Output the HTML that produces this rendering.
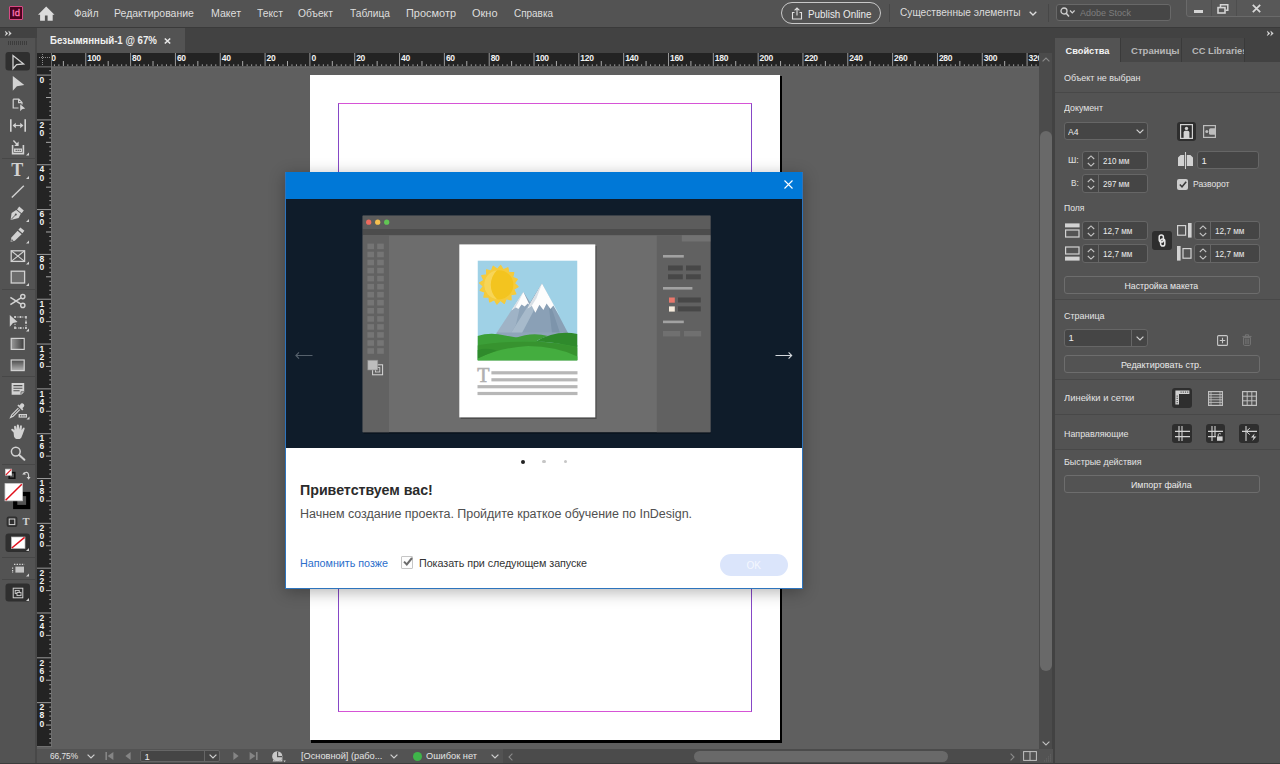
<!DOCTYPE html>
<html lang="ru"><head><meta charset="utf-8"><title>InDesign</title>
<style>
*{box-sizing:border-box;margin:0;padding:0}
html,body{width:1280px;height:764px;overflow:hidden;background:#535353;font-family:"Liberation Sans",sans-serif;}
#app{position:relative;width:1280px;height:764px;overflow:hidden;background:#535353;}
.a{position:absolute}
.t{position:absolute;white-space:nowrap;line-height:1;transform-origin:0 50%;}
.fld{position:absolute;background:#454545;border:1px solid #666;border-radius:3px}
.btn{position:absolute;background:#535353;border:1px solid #6d6d6d;border-radius:3px}
.dk{position:absolute;background:#2e2e2e;border-radius:3px}
.hr{position:absolute;left:1055px;width:225px;height:1px;background:#484848}
svg{position:absolute;overflow:visible}
</style></head>
<body><div id="app">
<div class="a" style="left:0;top:0;width:1280px;height:27px;background:#535353"></div>
<div class="a" style="left:9px;top:6px;width:14px;height:14px;background:#49021f;border:1px solid #d84a84;border-radius:1px"></div>
<span class="t" style="left:12.0px;top:7.8px;font-size:9.5px;color:#ff74b4;letter-spacing:0px;-webkit-text-stroke:0.3px #ff74b4;">Id</span>
<svg style="left:0;top:0" width="60" height="27" viewBox="0 0 60 27"><path d="M46.2 6.6 L54.5 14.7 H52.7 V20.8 H47.6 V15.6 H44.9 V20.8 H40.1 V14.7 H38 Z" fill="#dcdcdc"/></svg>
<span class="t" style="left:74.0px;top:9.1px;font-size:10.25px;color:#dedede;transform:scaleX(0.972);">Файл</span>
<span class="t" style="left:114.0px;top:9.1px;font-size:10.25px;color:#dedede;transform:scaleX(1.024);">Редактирование</span>
<span class="t" style="left:211.0px;top:9.1px;font-size:10.25px;color:#dedede;transform:scaleX(1.034);">Макет</span>
<span class="t" style="left:257.0px;top:9.1px;font-size:10.25px;color:#dedede;transform:scaleX(1.007);">Текст</span>
<span class="t" style="left:298.0px;top:9.1px;font-size:10.25px;color:#dedede;">Объект</span>
<span class="t" style="left:349.5px;top:9.1px;font-size:10.25px;color:#dedede;transform:scaleX(0.995);">Таблица</span>
<span class="t" style="left:406.0px;top:9.1px;font-size:10.25px;color:#dedede;transform:scaleX(1.068);">Просмотр</span>
<span class="t" style="left:472.0px;top:9.1px;font-size:10.25px;color:#dedede;transform:scaleX(1.070);">Окно</span>
<span class="t" style="left:513.5px;top:9.1px;font-size:10.25px;color:#dedede;transform:scaleX(0.970);">Справка</span>
<div class="a" style="left:781px;top:2px;width:100px;height:22px;border:1px solid #c8c8c8;border-radius:11px"></div>
<svg style="left:791px;top:6.7px" width="12" height="13" viewBox="0 0 12 13"><path d="M3.5 5.5 H1.5 V12 H10.5 V5.5 H8.5" fill="none" stroke="#e0e0e0" stroke-width="1.1"/><path d="M6 8.5 V1.2 M3.6 3.4 L6 1 L8.4 3.4" fill="none" stroke="#e0e0e0" stroke-width="1.1"/></svg>
<span class="t" style="left:808.0px;top:9.9px;font-size:10px;color:#ececec;transform:scaleX(0.985);">Publish Online</span>
<div class="a" style="left:889px;top:4px;width:1px;height:18px;background:#474747"></div>
<span class="t" style="left:899.5px;top:8.3px;font-size:10.25px;color:#dcdcdc;transform:scaleX(0.989);">Существенные элементы</span>
<svg style="left:1029px;top:11px" width="8" height="5" viewBox="0 0 8 5"><path d="M0.7 0.7 L4 4 L7.3 0.7" fill="none" stroke="#dcdcdc" stroke-width="1.3"/></svg>
<div class="a" style="left:1048px;top:4px;width:1px;height:18px;background:#474747"></div>
<div class="a" style="left:1056px;top:4px;width:115px;height:17px;background:#464646;border:1px solid #686868;border-radius:3px"></div>
<svg style="left:1060px;top:7px" width="16" height="11" viewBox="0 0 16 11"><circle cx="4" cy="4" r="3" fill="none" stroke="#d0d0d0" stroke-width="1.3"/><path d="M6.2 6.2 L9 9.5" stroke="#d0d0d0" stroke-width="1.5"/><path d="M10 3.5 L12.3 5.8 L14.6 3.5" fill="none" stroke="#d0d0d0" stroke-width="1.2"/></svg>
<span class="t" style="left:1080.0px;top:7.8px;font-size:9.5px;color:#7e7e7e;transform:scaleX(0.947);">Adobe Stock</span>
<div class="a" style="left:1186px;top:-2px;width:98px;height:19px;background:#585858;border:1px solid #6a6a6a;border-radius:0 0 0 3px"></div>
<div class="a" style="left:1211px;top:0;width:1px;height:16px;background:#4e4e4e"></div>
<div class="a" style="left:1236px;top:0;width:1px;height:16px;background:#4e4e4e"></div>
<div class="a" style="left:1194px;top:10px;width:9px;height:3px;background:#d4d4d4"></div>
<svg style="left:1217px;top:4px" width="12" height="10" viewBox="0 0 12 10"><path d="M3.5 3 V0.8 H10.8 V6.2 H8.5" fill="none" stroke="#d4d4d4" stroke-width="1.5"/><rect x="1" y="3.6" width="7" height="5.4" fill="none" stroke="#d4d4d4" stroke-width="1.6"/></svg>
<svg style="left:1252px;top:4px" width="9" height="9" viewBox="0 0 9 9"><path d="M0.8 0.8 L8.2 8.2 M8.2 0.8 L0.8 8.2" stroke="#d8d8d8" stroke-width="1.7"/></svg>
<div class="a" style="left:0;top:27px;width:1280px;height:26px;background:#424242"></div>
<div class="a" style="left:0;top:27px;width:1280px;height:1px;background:#3a3a3a"></div>
<div class="a" style="left:37px;top:28px;width:148px;height:25px;background:#535353"></div>
<span class="t" style="left:50.0px;top:36.0px;font-size:10px;color:#f0f0f0;font-weight:700;transform:scaleX(0.968);">Безымянный-1 @ 67%</span>
<svg style="left:164px;top:38px" width="7" height="6" viewBox="0 0 7 6"><path d="M0.8 0.5 L6.2 5.5 M6.2 0.5 L0.8 5.5" stroke="#e8e8e8" stroke-width="1.6"/></svg>
<div class="a" style="left:0;top:28px;width:37px;height:736px;background:#535353"></div>
<div class="a" style="left:0;top:28px;width:37px;height:10px;background:#424242"></div>
<div class="a" style="left:35px;top:38px;width:2px;height:726px;background:#484848"></div>
<svg style="left:5px;top:30.6px" width="7" height="5" viewBox="0 0 7 5"><path d="M0.3 0.2 L2.9 2.4 L0.3 4.6 L1.2 2.4 Z M3.7 0.2 L6.3 2.4 L3.7 4.6 L4.6 2.4 Z" fill="#dedede" stroke="#dedede" stroke-width="0.5" stroke-linejoin="round"/></svg>
<div class="a" style="left:8px;top:41px;width:19px;height:4px;background:repeating-linear-gradient(90deg,#3c3c3c 0 1px,transparent 1px 2px)"></div>
<div class="a" style="left:2px;top:158px;width:33px;height:1px;background:#474747"></div>
<div class="a" style="left:2px;top:289px;width:33px;height:1px;background:#474747"></div>
<div class="a" style="left:2px;top:376px;width:33px;height:1px;background:#474747"></div>
<div class="a" style="left:2px;top:464px;width:33px;height:1px;background:#474747"></div>
<div class="a" style="left:2px;top:557px;width:33px;height:1px;background:#474747"></div>
<div class="a" style="left:2px;top:579px;width:33px;height:1px;background:#474747"></div>
<svg style="left:0;top:0" width="38" height="764" viewBox="0 0 38 764"><rect x="5.5" y="52" width="24.5" height="18.5" rx="3" fill="#2f2f2f"/><path d="M13 55.5 V68.7 L16.6 64.6 L23.6 63.9 Z" fill="none" stroke="#d2d2d2" stroke-width="1.3" stroke-linejoin="miter"/><path d="M12.8 76 V90.8 L16.9 86.3 L24.3 85 Z" fill="#d2d2d2"/><path d="M13.2 99.2 H18.8 L22 102.4 V104.5 M18.5 108 H13.2 V99.2 M18.6 99.4 V102.6 H21.8" fill="none" stroke="#d2d2d2" stroke-width="1.2"/><path d="M20.2 104.2 V111.2 L22 109.2 L25.2 108.6 Z" fill="#d2d2d2"/><path d="M10.8 119.2 V131.8 M25.2 119.2 V131.8" stroke="#d2d2d2" stroke-width="1.6"/><path d="M13.5 125.5 H22.5" stroke="#d2d2d2" stroke-width="1.2"/><path d="M15.8 122.8 L12.6 125.5 L15.8 128.2 Z M20.2 122.8 L23.4 125.5 L20.2 128.2 Z" fill="#d2d2d2"/><path d="M12.6 145 V153.6 H23.4 V145" fill="none" stroke="#d2d2d2" stroke-width="1.6"/><path d="M14 148.5 h8 v3.6 h-8 z" fill="#d2d2d2"/><path d="M15.6 149.7 h1.2 v1.2 h-1.2z M17.6 149.7 h1.2 v1.2 h-1.2z M19.6 149.7 h1.2 v1.2 h-1.2z" fill="#535353"/><path d="M13.4 140.6 L17.2 144.4" stroke="#d2d2d2" stroke-width="1.4"/><path d="M18.6 141.6 V146 H14.2 Z" fill="#d2d2d2"/><path d="M29 155.5 h-3 l3 -3 z" fill="#d2d2d2"/><path d="M29 179 h-3 l3 -3 z" fill="#d2d2d2"/><path d="M11.8 197.4 L23.8 185.8" stroke="#d2d2d2" stroke-width="1.4"/><path d="M19.2 206.6 L23.8 210.4 L21.6 213.2 L17 209.4 Z" fill="#d2d2d2"/><path d="M16.2 210 L20.8 213.8 L18.6 218 L10.6 220 L11.6 213 Z" fill="#d2d2d2"/><path d="M11 219.6 L15.4 215" stroke="#535353" stroke-width="0.9"/><circle cx="15.8" cy="214.6" r="1" fill="#535353"/><path d="M29 222 h-3 l3 -3 z" fill="#d2d2d2"/><path d="M20.4 227.4 L24.4 230.8 L22.4 233.2 L18.4 229.8 Z" fill="#d2d2d2"/><path d="M17.6 230.8 L21.6 234.2 L14.8 240.8 L10.6 241.8 L11.4 237.6 Z" fill="#d2d2d2"/><path d="M11.2 241.2 l0.5 -2.2 l1.8 1.6 z" fill="#535353"/><path d="M29 243.5 h-3 l3 -3 z" fill="#d2d2d2"/><rect x="11.2" y="250.8" width="13.4" height="10.6" fill="none" stroke="#d2d2d2" stroke-width="1.3"/><path d="M11.2 250.8 L24.6 261.4 M24.6 250.8 L11.2 261.4" stroke="#d2d2d2" stroke-width="1.1"/><path d="M29 264.5 h-3 l3 -3 z" fill="#d2d2d2"/><rect x="11.2" y="271.2" width="13.4" height="11.8" fill="#6c6c6c" stroke="#d2d2d2" stroke-width="1.3"/><path d="M29 286 h-3 l3 -3 z" fill="#d2d2d2"/><circle cx="22.8" cy="296.6" r="2.1" fill="none" stroke="#d2d2d2" stroke-width="1.4"/><circle cx="22.8" cy="305.4" r="2.1" fill="none" stroke="#d2d2d2" stroke-width="1.4"/><path d="M21 297.8 L10.4 304.6 M21 304.2 L10.4 297.4" stroke="#d2d2d2" stroke-width="1.6"/><path d="M9.8 315 V326.8 L13 323 L17.6 322 Z" fill="#d2d2d2"/><path d="M15 317 H26 V328 H15 V323" fill="none" stroke="#d2d2d2" stroke-width="1" stroke-dasharray="1.2 1.2"/><rect x="14.1" y="316.1" width="1.8" height="1.8" fill="#d2d2d2"/><rect x="19.6" y="316.1" width="1.8" height="1.8" fill="#d2d2d2"/><rect x="25.1" y="316.1" width="1.8" height="1.8" fill="#d2d2d2"/><rect x="25.1" y="321.6" width="1.8" height="1.8" fill="#d2d2d2"/><rect x="25.1" y="327.1" width="1.8" height="1.8" fill="#d2d2d2"/><rect x="19.6" y="327.1" width="1.8" height="1.8" fill="#d2d2d2"/><rect x="14.1" y="327.1" width="1.8" height="1.8" fill="#d2d2d2"/><path d="M29 331.5 h-3 l3 -3 z" fill="#d2d2d2"/><defs><linearGradient id="g1" x1="0" x2="1" y1="0" y2="0"><stop offset="0" stop-color="#9a9a9a"/><stop offset="1" stop-color="#3c3c3c"/></linearGradient><linearGradient id="g2" x1="0" x2="0" y1="0" y2="1"><stop offset="0" stop-color="#4a4a4a"/><stop offset="1" stop-color="#b4b4b4"/></linearGradient></defs><rect x="11.2" y="338.4" width="13" height="11" fill="url(#g1)" stroke="#d2d2d2" stroke-width="1.2"/><rect x="11.2" y="360" width="13" height="10.6" fill="url(#g2)" stroke="#d2d2d2" stroke-width="1.2"/><path d="M11.6 383 H24.2 V392 L21.4 394.8 H11.6 Z" fill="#d2d2d2"/><path d="M13.4 385.6 H22.4 M13.4 388.2 H22.4 M13.4 390.8 H19.6" stroke="#535353" stroke-width="1.1"/><path d="M21 394.6 V391.8 H24" fill="none" stroke="#535353" stroke-width="0.8"/><path d="M21 403.6 a2.2 2.2 0 0 1 3 3 l-1.6 1.6 l1 1 l-1.2 1.2 l-4.8 -4.8 l1.2 -1.2 l1 1 z" fill="#d2d2d2"/><path d="M18.4 408.2 L11.8 414.8 L10.6 417.4 L13.2 416.2 L19.8 409.6" fill="none" stroke="#d2d2d2" stroke-width="1.2"/><rect x="18.6" y="414" width="8.4" height="3.6" fill="#d2d2d2"/><path d="M20 415.2 h1.4 v1.2 h-1.4z M22.2 415.2 h1.4 v1.2 h-1.4z M24.4 415.2 h1.4 v1.2 h-1.4z" fill="#535353"/><path d="M29.5 419.5 h-3 l3 -3 z" fill="#d2d2d2"/><path d="M13.6 432.4 L11.4 430.2 Q10.8 429 12 428.8 Q13 428.8 14.4 430.2 L14 426.8 Q14.2 425.6 15.2 425.8 Q16 426 16.2 427 L16.6 429.4 L16.8 425.4 Q17 424.4 17.9 424.5 Q18.8 424.6 18.9 425.6 L19.2 429.4 L20 426 Q20.4 425 21.2 425.2 Q22 425.5 21.9 426.6 L21.6 430.2 L23 428 Q23.8 427.2 24.4 427.8 Q24.9 428.4 24.4 429.4 L22.4 435 Q21.6 438.2 19.6 439 H16.4 Q14.8 438.4 14 436.4 Z" fill="#d2d2d2"/><circle cx="15.8" cy="451.6" r="4.4" fill="none" stroke="#d2d2d2" stroke-width="1.5"/><path d="M19.2 455 L24.4 459.8" stroke="#d2d2d2" stroke-width="2" stroke-linecap="round"/><rect x="9.2" y="472.6" width="5.6" height="5.6" fill="none" stroke="#111" stroke-width="1.6"/><rect x="5.6" y="469.2" width="6" height="6" fill="#fff" stroke="#ddd" stroke-width="0.8"/><path d="M5.8 475 L11.4 469.4" stroke="#e0202a" stroke-width="1.1"/><path d="M24 474.4 Q24.2 472.2 26.6 472.4 Q28.8 472.6 28.6 477" fill="none" stroke="#d2d2d2" stroke-width="1.2"/><path d="M22.2 474.6 h3.8 l-1.9 -2.6 z M26.6 477 h4 l-2 2.8 z" fill="#d2d2d2"/><rect x="15.2" y="494" width="13" height="13" fill="none" stroke="#000" stroke-width="4.2"/><rect x="5" y="483.6" width="17.4" height="17.2" fill="#fff" stroke="#cfcfcf" stroke-width="0.8"/><path d="M5.6 500.2 L21.8 484.2" stroke="#e0101c" stroke-width="1.5"/><rect x="6.6" y="516.6" width="10.8" height="10.4" rx="2" fill="#2f2f2f"/><rect x="9.2" y="519" width="5.6" height="5.6" fill="none" stroke="#d2d2d2" stroke-width="1"/><rect x="5.5" y="533.5" width="24.5" height="18.5" rx="3" fill="#2f2f2f"/><rect x="11.4" y="537" width="13.6" height="11.4" fill="#fff" stroke="#bbb" stroke-width="0.7"/><path d="M11.8 548 L24.6 537.4" stroke="#e0101c" stroke-width="1.5"/><path d="M29 551 h-3 l3 -3 z" fill="#d2d2d2"/><rect x="15.4" y="566.6" width="8.6" height="6" fill="#c4c4c4"/><path d="M14 564.4 H24.6" stroke="#d2d2d2" stroke-width="1.2" stroke-dasharray="1.4 1.2"/><path d="M12.6 567.4 V573" stroke="#d2d2d2" stroke-width="1.2" stroke-dasharray="1.4 1.2"/><path d="M29 576.5 h-3 l3 -3 z" fill="#d2d2d2"/><rect x="5.5" y="583.5" width="24.5" height="18" rx="3" fill="#2f2f2f"/><rect x="13.2" y="588.2" width="9.6" height="9.6" fill="none" stroke="#d2d2d2" stroke-width="1"/><rect x="15.2" y="590.4" width="4" height="3" fill="none" stroke="#d2d2d2" stroke-width="0.9"/><rect x="17" y="592.4" width="4" height="3.2" fill="#2f2f2f" stroke="#d2d2d2" stroke-width="0.9"/><path d="M29 601 h-3 l3 -3 z" fill="#d2d2d2"/></svg>
<span class="t" style="left:11.3px;top:161.3px;font-size:18px;color:#d2d2d2;font-weight:700;font-family:'Liberation Serif',serif;">T</span>
<span class="t" style="left:22.6px;top:516.5px;font-size:10.5px;color:#d2d2d2;font-weight:700;font-family:'Liberation Serif',serif;">T</span>
<div class="a" style="left:37px;top:53px;width:1003px;height:696px;background:#5f5f5f"></div>
<div class="a" style="left:311px;top:76px;width:471px;height:666.6px;background:#000"></div>
<div class="a" style="left:310px;top:75.2px;width:470px;height:664.8px;background:#fff"></div>
<div class="a" style="left:338.2px;top:103.2px;width:414px;height:609px;border:1px solid #d653d6;border-left-color:#8648c6;border-right-color:#8648c6"></div>
<div class="a" style="left:37px;top:53px;width:1002px;height:14px;background:#232323"></div>
<svg style="left:37px;top:65px" width="1002" height="4" viewBox="0 0 1002 4"><rect x="0" y="1.3" width="1002" height="1.1" fill="#707070"/></svg>
<svg style="left:0;top:0" width="1040" height="68" viewBox="0 0 1040 68"><rect x="53.90" y="64.3" width="1" height="1.8" fill="#9a9a9a"/><rect x="58.39" y="64.3" width="1" height="1.8" fill="#9a9a9a"/><rect x="62.87" y="61" width="1" height="5" fill="#a8a8a8"/><rect x="67.35" y="64.3" width="1" height="1.8" fill="#9a9a9a"/><rect x="71.83" y="64.3" width="1" height="1.8" fill="#9a9a9a"/><rect x="76.32" y="64.3" width="1" height="1.8" fill="#9a9a9a"/><rect x="80.80" y="64.3" width="1" height="1.8" fill="#9a9a9a"/><rect x="85.28" y="53" width="1" height="13" fill="#9a9a9a"/><rect x="89.76" y="64.3" width="1" height="1.8" fill="#9a9a9a"/><rect x="94.24" y="64.3" width="1" height="1.8" fill="#9a9a9a"/><rect x="98.73" y="64.3" width="1" height="1.8" fill="#9a9a9a"/><rect x="103.21" y="64.3" width="1" height="1.8" fill="#9a9a9a"/><rect x="107.69" y="61" width="1" height="5" fill="#a8a8a8"/><rect x="112.17" y="64.3" width="1" height="1.8" fill="#9a9a9a"/><rect x="116.66" y="64.3" width="1" height="1.8" fill="#9a9a9a"/><rect x="121.14" y="64.3" width="1" height="1.8" fill="#9a9a9a"/><rect x="125.62" y="64.3" width="1" height="1.8" fill="#9a9a9a"/><rect x="130.10" y="53" width="1" height="13" fill="#9a9a9a"/><rect x="134.59" y="64.3" width="1" height="1.8" fill="#9a9a9a"/><rect x="139.07" y="64.3" width="1" height="1.8" fill="#9a9a9a"/><rect x="143.55" y="64.3" width="1" height="1.8" fill="#9a9a9a"/><rect x="148.03" y="64.3" width="1" height="1.8" fill="#9a9a9a"/><rect x="152.52" y="61" width="1" height="5" fill="#a8a8a8"/><rect x="157.00" y="64.3" width="1" height="1.8" fill="#9a9a9a"/><rect x="161.48" y="64.3" width="1" height="1.8" fill="#9a9a9a"/><rect x="165.96" y="64.3" width="1" height="1.8" fill="#9a9a9a"/><rect x="170.45" y="64.3" width="1" height="1.8" fill="#9a9a9a"/><rect x="174.93" y="53" width="1" height="13" fill="#9a9a9a"/><rect x="179.41" y="64.3" width="1" height="1.8" fill="#9a9a9a"/><rect x="183.89" y="64.3" width="1" height="1.8" fill="#9a9a9a"/><rect x="188.38" y="64.3" width="1" height="1.8" fill="#9a9a9a"/><rect x="192.86" y="64.3" width="1" height="1.8" fill="#9a9a9a"/><rect x="197.34" y="61" width="1" height="5" fill="#a8a8a8"/><rect x="201.82" y="64.3" width="1" height="1.8" fill="#9a9a9a"/><rect x="206.30" y="64.3" width="1" height="1.8" fill="#9a9a9a"/><rect x="210.79" y="64.3" width="1" height="1.8" fill="#9a9a9a"/><rect x="215.27" y="64.3" width="1" height="1.8" fill="#9a9a9a"/><rect x="219.75" y="53" width="1" height="13" fill="#9a9a9a"/><rect x="224.23" y="64.3" width="1" height="1.8" fill="#9a9a9a"/><rect x="228.72" y="64.3" width="1" height="1.8" fill="#9a9a9a"/><rect x="233.20" y="64.3" width="1" height="1.8" fill="#9a9a9a"/><rect x="237.68" y="64.3" width="1" height="1.8" fill="#9a9a9a"/><rect x="242.16" y="61" width="1" height="5" fill="#a8a8a8"/><rect x="246.65" y="64.3" width="1" height="1.8" fill="#9a9a9a"/><rect x="251.13" y="64.3" width="1" height="1.8" fill="#9a9a9a"/><rect x="255.61" y="64.3" width="1" height="1.8" fill="#9a9a9a"/><rect x="260.09" y="64.3" width="1" height="1.8" fill="#9a9a9a"/><rect x="264.58" y="53" width="1" height="13" fill="#9a9a9a"/><rect x="269.06" y="64.3" width="1" height="1.8" fill="#9a9a9a"/><rect x="273.54" y="64.3" width="1" height="1.8" fill="#9a9a9a"/><rect x="278.02" y="64.3" width="1" height="1.8" fill="#9a9a9a"/><rect x="282.51" y="64.3" width="1" height="1.8" fill="#9a9a9a"/><rect x="286.99" y="61" width="1" height="5" fill="#a8a8a8"/><rect x="291.47" y="64.3" width="1" height="1.8" fill="#9a9a9a"/><rect x="295.95" y="64.3" width="1" height="1.8" fill="#9a9a9a"/><rect x="300.44" y="64.3" width="1" height="1.8" fill="#9a9a9a"/><rect x="304.92" y="64.3" width="1" height="1.8" fill="#9a9a9a"/><rect x="309.40" y="53" width="1" height="13" fill="#9a9a9a"/><rect x="313.88" y="64.3" width="1" height="1.8" fill="#9a9a9a"/><rect x="318.36" y="64.3" width="1" height="1.8" fill="#9a9a9a"/><rect x="322.85" y="64.3" width="1" height="1.8" fill="#9a9a9a"/><rect x="327.33" y="64.3" width="1" height="1.8" fill="#9a9a9a"/><rect x="331.81" y="61" width="1" height="5" fill="#a8a8a8"/><rect x="336.29" y="64.3" width="1" height="1.8" fill="#9a9a9a"/><rect x="340.78" y="64.3" width="1" height="1.8" fill="#9a9a9a"/><rect x="345.26" y="64.3" width="1" height="1.8" fill="#9a9a9a"/><rect x="349.74" y="64.3" width="1" height="1.8" fill="#9a9a9a"/><rect x="354.22" y="53" width="1" height="13" fill="#9a9a9a"/><rect x="358.71" y="64.3" width="1" height="1.8" fill="#9a9a9a"/><rect x="363.19" y="64.3" width="1" height="1.8" fill="#9a9a9a"/><rect x="367.67" y="64.3" width="1" height="1.8" fill="#9a9a9a"/><rect x="372.15" y="64.3" width="1" height="1.8" fill="#9a9a9a"/><rect x="376.64" y="61" width="1" height="5" fill="#a8a8a8"/><rect x="381.12" y="64.3" width="1" height="1.8" fill="#9a9a9a"/><rect x="385.60" y="64.3" width="1" height="1.8" fill="#9a9a9a"/><rect x="390.08" y="64.3" width="1" height="1.8" fill="#9a9a9a"/><rect x="394.57" y="64.3" width="1" height="1.8" fill="#9a9a9a"/><rect x="399.05" y="53" width="1" height="13" fill="#9a9a9a"/><rect x="403.53" y="64.3" width="1" height="1.8" fill="#9a9a9a"/><rect x="408.01" y="64.3" width="1" height="1.8" fill="#9a9a9a"/><rect x="412.50" y="64.3" width="1" height="1.8" fill="#9a9a9a"/><rect x="416.98" y="64.3" width="1" height="1.8" fill="#9a9a9a"/><rect x="421.46" y="61" width="1" height="5" fill="#a8a8a8"/><rect x="425.94" y="64.3" width="1" height="1.8" fill="#9a9a9a"/><rect x="430.42" y="64.3" width="1" height="1.8" fill="#9a9a9a"/><rect x="434.91" y="64.3" width="1" height="1.8" fill="#9a9a9a"/><rect x="439.39" y="64.3" width="1" height="1.8" fill="#9a9a9a"/><rect x="443.87" y="53" width="1" height="13" fill="#9a9a9a"/><rect x="448.35" y="64.3" width="1" height="1.8" fill="#9a9a9a"/><rect x="452.84" y="64.3" width="1" height="1.8" fill="#9a9a9a"/><rect x="457.32" y="64.3" width="1" height="1.8" fill="#9a9a9a"/><rect x="461.80" y="64.3" width="1" height="1.8" fill="#9a9a9a"/><rect x="466.28" y="61" width="1" height="5" fill="#a8a8a8"/><rect x="470.77" y="64.3" width="1" height="1.8" fill="#9a9a9a"/><rect x="475.25" y="64.3" width="1" height="1.8" fill="#9a9a9a"/><rect x="479.73" y="64.3" width="1" height="1.8" fill="#9a9a9a"/><rect x="484.21" y="64.3" width="1" height="1.8" fill="#9a9a9a"/><rect x="488.70" y="53" width="1" height="13" fill="#9a9a9a"/><rect x="493.18" y="64.3" width="1" height="1.8" fill="#9a9a9a"/><rect x="497.66" y="64.3" width="1" height="1.8" fill="#9a9a9a"/><rect x="502.14" y="64.3" width="1" height="1.8" fill="#9a9a9a"/><rect x="506.63" y="64.3" width="1" height="1.8" fill="#9a9a9a"/><rect x="511.11" y="61" width="1" height="5" fill="#a8a8a8"/><rect x="515.59" y="64.3" width="1" height="1.8" fill="#9a9a9a"/><rect x="520.07" y="64.3" width="1" height="1.8" fill="#9a9a9a"/><rect x="524.56" y="64.3" width="1" height="1.8" fill="#9a9a9a"/><rect x="529.04" y="64.3" width="1" height="1.8" fill="#9a9a9a"/><rect x="533.52" y="53" width="1" height="13" fill="#9a9a9a"/><rect x="538.00" y="64.3" width="1" height="1.8" fill="#9a9a9a"/><rect x="542.48" y="64.3" width="1" height="1.8" fill="#9a9a9a"/><rect x="546.97" y="64.3" width="1" height="1.8" fill="#9a9a9a"/><rect x="551.45" y="64.3" width="1" height="1.8" fill="#9a9a9a"/><rect x="555.93" y="61" width="1" height="5" fill="#a8a8a8"/><rect x="560.41" y="64.3" width="1" height="1.8" fill="#9a9a9a"/><rect x="564.90" y="64.3" width="1" height="1.8" fill="#9a9a9a"/><rect x="569.38" y="64.3" width="1" height="1.8" fill="#9a9a9a"/><rect x="573.86" y="64.3" width="1" height="1.8" fill="#9a9a9a"/><rect x="578.34" y="53" width="1" height="13" fill="#9a9a9a"/><rect x="582.83" y="64.3" width="1" height="1.8" fill="#9a9a9a"/><rect x="587.31" y="64.3" width="1" height="1.8" fill="#9a9a9a"/><rect x="591.79" y="64.3" width="1" height="1.8" fill="#9a9a9a"/><rect x="596.27" y="64.3" width="1" height="1.8" fill="#9a9a9a"/><rect x="600.76" y="61" width="1" height="5" fill="#a8a8a8"/><rect x="605.24" y="64.3" width="1" height="1.8" fill="#9a9a9a"/><rect x="609.72" y="64.3" width="1" height="1.8" fill="#9a9a9a"/><rect x="614.20" y="64.3" width="1" height="1.8" fill="#9a9a9a"/><rect x="618.69" y="64.3" width="1" height="1.8" fill="#9a9a9a"/><rect x="623.17" y="53" width="1" height="13" fill="#9a9a9a"/><rect x="627.65" y="64.3" width="1" height="1.8" fill="#9a9a9a"/><rect x="632.13" y="64.3" width="1" height="1.8" fill="#9a9a9a"/><rect x="636.62" y="64.3" width="1" height="1.8" fill="#9a9a9a"/><rect x="641.10" y="64.3" width="1" height="1.8" fill="#9a9a9a"/><rect x="645.58" y="61" width="1" height="5" fill="#a8a8a8"/><rect x="650.06" y="64.3" width="1" height="1.8" fill="#9a9a9a"/><rect x="654.54" y="64.3" width="1" height="1.8" fill="#9a9a9a"/><rect x="659.03" y="64.3" width="1" height="1.8" fill="#9a9a9a"/><rect x="663.51" y="64.3" width="1" height="1.8" fill="#9a9a9a"/><rect x="667.99" y="53" width="1" height="13" fill="#9a9a9a"/><rect x="672.47" y="64.3" width="1" height="1.8" fill="#9a9a9a"/><rect x="676.96" y="64.3" width="1" height="1.8" fill="#9a9a9a"/><rect x="681.44" y="64.3" width="1" height="1.8" fill="#9a9a9a"/><rect x="685.92" y="64.3" width="1" height="1.8" fill="#9a9a9a"/><rect x="690.40" y="61" width="1" height="5" fill="#a8a8a8"/><rect x="694.89" y="64.3" width="1" height="1.8" fill="#9a9a9a"/><rect x="699.37" y="64.3" width="1" height="1.8" fill="#9a9a9a"/><rect x="703.85" y="64.3" width="1" height="1.8" fill="#9a9a9a"/><rect x="708.33" y="64.3" width="1" height="1.8" fill="#9a9a9a"/><rect x="712.82" y="53" width="1" height="13" fill="#9a9a9a"/><rect x="717.30" y="64.3" width="1" height="1.8" fill="#9a9a9a"/><rect x="721.78" y="64.3" width="1" height="1.8" fill="#9a9a9a"/><rect x="726.26" y="64.3" width="1" height="1.8" fill="#9a9a9a"/><rect x="730.75" y="64.3" width="1" height="1.8" fill="#9a9a9a"/><rect x="735.23" y="61" width="1" height="5" fill="#a8a8a8"/><rect x="739.71" y="64.3" width="1" height="1.8" fill="#9a9a9a"/><rect x="744.19" y="64.3" width="1" height="1.8" fill="#9a9a9a"/><rect x="748.68" y="64.3" width="1" height="1.8" fill="#9a9a9a"/><rect x="753.16" y="64.3" width="1" height="1.8" fill="#9a9a9a"/><rect x="757.64" y="53" width="1" height="13" fill="#9a9a9a"/><rect x="762.12" y="64.3" width="1" height="1.8" fill="#9a9a9a"/><rect x="766.60" y="64.3" width="1" height="1.8" fill="#9a9a9a"/><rect x="771.09" y="64.3" width="1" height="1.8" fill="#9a9a9a"/><rect x="775.57" y="64.3" width="1" height="1.8" fill="#9a9a9a"/><rect x="780.05" y="61" width="1" height="5" fill="#a8a8a8"/><rect x="784.53" y="64.3" width="1" height="1.8" fill="#9a9a9a"/><rect x="789.02" y="64.3" width="1" height="1.8" fill="#9a9a9a"/><rect x="793.50" y="64.3" width="1" height="1.8" fill="#9a9a9a"/><rect x="797.98" y="64.3" width="1" height="1.8" fill="#9a9a9a"/><rect x="802.46" y="53" width="1" height="13" fill="#9a9a9a"/><rect x="806.95" y="64.3" width="1" height="1.8" fill="#9a9a9a"/><rect x="811.43" y="64.3" width="1" height="1.8" fill="#9a9a9a"/><rect x="815.91" y="64.3" width="1" height="1.8" fill="#9a9a9a"/><rect x="820.39" y="64.3" width="1" height="1.8" fill="#9a9a9a"/><rect x="824.88" y="61" width="1" height="5" fill="#a8a8a8"/><rect x="829.36" y="64.3" width="1" height="1.8" fill="#9a9a9a"/><rect x="833.84" y="64.3" width="1" height="1.8" fill="#9a9a9a"/><rect x="838.32" y="64.3" width="1" height="1.8" fill="#9a9a9a"/><rect x="842.81" y="64.3" width="1" height="1.8" fill="#9a9a9a"/><rect x="847.29" y="53" width="1" height="13" fill="#9a9a9a"/><rect x="851.77" y="64.3" width="1" height="1.8" fill="#9a9a9a"/><rect x="856.25" y="64.3" width="1" height="1.8" fill="#9a9a9a"/><rect x="860.74" y="64.3" width="1" height="1.8" fill="#9a9a9a"/><rect x="865.22" y="64.3" width="1" height="1.8" fill="#9a9a9a"/><rect x="869.70" y="61" width="1" height="5" fill="#a8a8a8"/><rect x="874.18" y="64.3" width="1" height="1.8" fill="#9a9a9a"/><rect x="878.66" y="64.3" width="1" height="1.8" fill="#9a9a9a"/><rect x="883.15" y="64.3" width="1" height="1.8" fill="#9a9a9a"/><rect x="887.63" y="64.3" width="1" height="1.8" fill="#9a9a9a"/><rect x="892.11" y="53" width="1" height="13" fill="#9a9a9a"/><rect x="896.59" y="64.3" width="1" height="1.8" fill="#9a9a9a"/><rect x="901.08" y="64.3" width="1" height="1.8" fill="#9a9a9a"/><rect x="905.56" y="64.3" width="1" height="1.8" fill="#9a9a9a"/><rect x="910.04" y="64.3" width="1" height="1.8" fill="#9a9a9a"/><rect x="914.52" y="61" width="1" height="5" fill="#a8a8a8"/><rect x="919.01" y="64.3" width="1" height="1.8" fill="#9a9a9a"/><rect x="923.49" y="64.3" width="1" height="1.8" fill="#9a9a9a"/><rect x="927.97" y="64.3" width="1" height="1.8" fill="#9a9a9a"/><rect x="932.45" y="64.3" width="1" height="1.8" fill="#9a9a9a"/><rect x="936.94" y="53" width="1" height="13" fill="#9a9a9a"/><rect x="941.42" y="64.3" width="1" height="1.8" fill="#9a9a9a"/><rect x="945.90" y="64.3" width="1" height="1.8" fill="#9a9a9a"/><rect x="950.38" y="64.3" width="1" height="1.8" fill="#9a9a9a"/><rect x="954.87" y="64.3" width="1" height="1.8" fill="#9a9a9a"/><rect x="959.35" y="61" width="1" height="5" fill="#a8a8a8"/><rect x="963.83" y="64.3" width="1" height="1.8" fill="#9a9a9a"/><rect x="968.31" y="64.3" width="1" height="1.8" fill="#9a9a9a"/><rect x="972.80" y="64.3" width="1" height="1.8" fill="#9a9a9a"/><rect x="977.28" y="64.3" width="1" height="1.8" fill="#9a9a9a"/><rect x="981.76" y="53" width="1" height="13" fill="#9a9a9a"/><rect x="986.24" y="64.3" width="1" height="1.8" fill="#9a9a9a"/><rect x="990.72" y="64.3" width="1" height="1.8" fill="#9a9a9a"/><rect x="995.21" y="64.3" width="1" height="1.8" fill="#9a9a9a"/><rect x="999.69" y="64.3" width="1" height="1.8" fill="#9a9a9a"/><rect x="1004.17" y="61" width="1" height="5" fill="#a8a8a8"/><rect x="1008.65" y="64.3" width="1" height="1.8" fill="#9a9a9a"/><rect x="1013.14" y="64.3" width="1" height="1.8" fill="#9a9a9a"/><rect x="1017.62" y="64.3" width="1" height="1.8" fill="#9a9a9a"/><rect x="1022.10" y="64.3" width="1" height="1.8" fill="#9a9a9a"/><rect x="1026.58" y="53" width="1" height="13" fill="#9a9a9a"/><rect x="1031.07" y="64.3" width="1" height="1.8" fill="#9a9a9a"/><rect x="1035.55" y="64.3" width="1" height="1.8" fill="#9a9a9a"/></svg>
<div class="a" style="left:52px;top:53px;width:987px;height:13px;overflow:hidden">
<span class="t" style="left:-9.7px;top:1.2px;font-size:8.5px;color:#f2f2f2;font-weight:700;letter-spacing:-0.3px;">120</span>
<span class="t" style="left:35.3px;top:1.2px;font-size:8.5px;color:#f2f2f2;font-weight:700;letter-spacing:-0.3px;">100</span>
<span class="t" style="left:80.1px;top:1.2px;font-size:8.5px;color:#f2f2f2;font-weight:700;letter-spacing:-0.3px;">80</span>
<span class="t" style="left:124.9px;top:1.2px;font-size:8.5px;color:#f2f2f2;font-weight:700;letter-spacing:-0.3px;">60</span>
<span class="t" style="left:169.8px;top:1.2px;font-size:8.5px;color:#f2f2f2;font-weight:700;letter-spacing:-0.3px;">40</span>
<span class="t" style="left:214.6px;top:1.2px;font-size:8.5px;color:#f2f2f2;font-weight:700;letter-spacing:-0.3px;">20</span>
<span class="t" style="left:259.4px;top:1.2px;font-size:8.5px;color:#f2f2f2;font-weight:700;letter-spacing:-0.3px;">0</span>
<span class="t" style="left:304.2px;top:1.2px;font-size:8.5px;color:#f2f2f2;font-weight:700;letter-spacing:-0.3px;">20</span>
<span class="t" style="left:349.0px;top:1.2px;font-size:8.5px;color:#f2f2f2;font-weight:700;letter-spacing:-0.3px;">40</span>
<span class="t" style="left:393.9px;top:1.2px;font-size:8.5px;color:#f2f2f2;font-weight:700;letter-spacing:-0.3px;">60</span>
<span class="t" style="left:438.7px;top:1.2px;font-size:8.5px;color:#f2f2f2;font-weight:700;letter-spacing:-0.3px;">80</span>
<span class="t" style="left:483.5px;top:1.2px;font-size:8.5px;color:#f2f2f2;font-weight:700;letter-spacing:-0.3px;">100</span>
<span class="t" style="left:528.3px;top:1.2px;font-size:8.5px;color:#f2f2f2;font-weight:700;letter-spacing:-0.3px;">120</span>
<span class="t" style="left:573.2px;top:1.2px;font-size:8.5px;color:#f2f2f2;font-weight:700;letter-spacing:-0.3px;">140</span>
<span class="t" style="left:618.0px;top:1.2px;font-size:8.5px;color:#f2f2f2;font-weight:700;letter-spacing:-0.3px;">160</span>
<span class="t" style="left:662.8px;top:1.2px;font-size:8.5px;color:#f2f2f2;font-weight:700;letter-spacing:-0.3px;">180</span>
<span class="t" style="left:707.6px;top:1.2px;font-size:8.5px;color:#f2f2f2;font-weight:700;letter-spacing:-0.3px;">200</span>
<span class="t" style="left:752.5px;top:1.2px;font-size:8.5px;color:#f2f2f2;font-weight:700;letter-spacing:-0.3px;">220</span>
<span class="t" style="left:797.3px;top:1.2px;font-size:8.5px;color:#f2f2f2;font-weight:700;letter-spacing:-0.3px;">240</span>
<span class="t" style="left:842.1px;top:1.2px;font-size:8.5px;color:#f2f2f2;font-weight:700;letter-spacing:-0.3px;">260</span>
<span class="t" style="left:886.9px;top:1.2px;font-size:8.5px;color:#f2f2f2;font-weight:700;letter-spacing:-0.3px;">280</span>
<span class="t" style="left:931.8px;top:1.2px;font-size:8.5px;color:#f2f2f2;font-weight:700;letter-spacing:-0.3px;">300</span>
<span class="t" style="left:976.6px;top:1.2px;font-size:8.5px;color:#f2f2f2;font-weight:700;letter-spacing:-0.3px;">320</span>
</div>
<div class="a" style="left:37px;top:67px;width:15px;height:680px;background:#232323;border-right:1px solid #6e6e6e"></div>
<svg style="left:0;top:0" width="60" height="748" viewBox="0 0 60 748"><rect x="49.3" y="70.12" width="1.8" height="1" fill="#9a9a9a"/><rect x="37" y="74.60" width="14" height="1" fill="#9a9a9a"/><rect x="49.3" y="79.08" width="1.8" height="1" fill="#9a9a9a"/><rect x="49.3" y="83.56" width="1.8" height="1" fill="#9a9a9a"/><rect x="49.3" y="88.05" width="1.8" height="1" fill="#9a9a9a"/><rect x="49.3" y="92.53" width="1.8" height="1" fill="#9a9a9a"/><rect x="46" y="97.01" width="5" height="1" fill="#a8a8a8"/><rect x="49.3" y="101.49" width="1.8" height="1" fill="#9a9a9a"/><rect x="49.3" y="105.98" width="1.8" height="1" fill="#9a9a9a"/><rect x="49.3" y="110.46" width="1.8" height="1" fill="#9a9a9a"/><rect x="49.3" y="114.94" width="1.8" height="1" fill="#9a9a9a"/><rect x="37" y="119.42" width="14" height="1" fill="#9a9a9a"/><rect x="49.3" y="123.91" width="1.8" height="1" fill="#9a9a9a"/><rect x="49.3" y="128.39" width="1.8" height="1" fill="#9a9a9a"/><rect x="49.3" y="132.87" width="1.8" height="1" fill="#9a9a9a"/><rect x="49.3" y="137.35" width="1.8" height="1" fill="#9a9a9a"/><rect x="46" y="141.84" width="5" height="1" fill="#a8a8a8"/><rect x="49.3" y="146.32" width="1.8" height="1" fill="#9a9a9a"/><rect x="49.3" y="150.80" width="1.8" height="1" fill="#9a9a9a"/><rect x="49.3" y="155.28" width="1.8" height="1" fill="#9a9a9a"/><rect x="49.3" y="159.77" width="1.8" height="1" fill="#9a9a9a"/><rect x="37" y="164.25" width="14" height="1" fill="#9a9a9a"/><rect x="49.3" y="168.73" width="1.8" height="1" fill="#9a9a9a"/><rect x="49.3" y="173.21" width="1.8" height="1" fill="#9a9a9a"/><rect x="49.3" y="177.70" width="1.8" height="1" fill="#9a9a9a"/><rect x="49.3" y="182.18" width="1.8" height="1" fill="#9a9a9a"/><rect x="46" y="186.66" width="5" height="1" fill="#a8a8a8"/><rect x="49.3" y="191.14" width="1.8" height="1" fill="#9a9a9a"/><rect x="49.3" y="195.62" width="1.8" height="1" fill="#9a9a9a"/><rect x="49.3" y="200.11" width="1.8" height="1" fill="#9a9a9a"/><rect x="49.3" y="204.59" width="1.8" height="1" fill="#9a9a9a"/><rect x="37" y="209.07" width="14" height="1" fill="#9a9a9a"/><rect x="49.3" y="213.55" width="1.8" height="1" fill="#9a9a9a"/><rect x="49.3" y="218.04" width="1.8" height="1" fill="#9a9a9a"/><rect x="49.3" y="222.52" width="1.8" height="1" fill="#9a9a9a"/><rect x="49.3" y="227.00" width="1.8" height="1" fill="#9a9a9a"/><rect x="46" y="231.48" width="5" height="1" fill="#a8a8a8"/><rect x="49.3" y="235.97" width="1.8" height="1" fill="#9a9a9a"/><rect x="49.3" y="240.45" width="1.8" height="1" fill="#9a9a9a"/><rect x="49.3" y="244.93" width="1.8" height="1" fill="#9a9a9a"/><rect x="49.3" y="249.41" width="1.8" height="1" fill="#9a9a9a"/><rect x="37" y="253.90" width="14" height="1" fill="#9a9a9a"/><rect x="49.3" y="258.38" width="1.8" height="1" fill="#9a9a9a"/><rect x="49.3" y="262.86" width="1.8" height="1" fill="#9a9a9a"/><rect x="49.3" y="267.34" width="1.8" height="1" fill="#9a9a9a"/><rect x="49.3" y="271.83" width="1.8" height="1" fill="#9a9a9a"/><rect x="46" y="276.31" width="5" height="1" fill="#a8a8a8"/><rect x="49.3" y="280.79" width="1.8" height="1" fill="#9a9a9a"/><rect x="49.3" y="285.27" width="1.8" height="1" fill="#9a9a9a"/><rect x="49.3" y="289.76" width="1.8" height="1" fill="#9a9a9a"/><rect x="49.3" y="294.24" width="1.8" height="1" fill="#9a9a9a"/><rect x="37" y="298.72" width="14" height="1" fill="#9a9a9a"/><rect x="49.3" y="303.20" width="1.8" height="1" fill="#9a9a9a"/><rect x="49.3" y="307.68" width="1.8" height="1" fill="#9a9a9a"/><rect x="49.3" y="312.17" width="1.8" height="1" fill="#9a9a9a"/><rect x="49.3" y="316.65" width="1.8" height="1" fill="#9a9a9a"/><rect x="46" y="321.13" width="5" height="1" fill="#a8a8a8"/><rect x="49.3" y="325.61" width="1.8" height="1" fill="#9a9a9a"/><rect x="49.3" y="330.10" width="1.8" height="1" fill="#9a9a9a"/><rect x="49.3" y="334.58" width="1.8" height="1" fill="#9a9a9a"/><rect x="49.3" y="339.06" width="1.8" height="1" fill="#9a9a9a"/><rect x="37" y="343.54" width="14" height="1" fill="#9a9a9a"/><rect x="49.3" y="348.03" width="1.8" height="1" fill="#9a9a9a"/><rect x="49.3" y="352.51" width="1.8" height="1" fill="#9a9a9a"/><rect x="49.3" y="356.99" width="1.8" height="1" fill="#9a9a9a"/><rect x="49.3" y="361.47" width="1.8" height="1" fill="#9a9a9a"/><rect x="46" y="365.96" width="5" height="1" fill="#a8a8a8"/><rect x="49.3" y="370.44" width="1.8" height="1" fill="#9a9a9a"/><rect x="49.3" y="374.92" width="1.8" height="1" fill="#9a9a9a"/><rect x="49.3" y="379.40" width="1.8" height="1" fill="#9a9a9a"/><rect x="49.3" y="383.89" width="1.8" height="1" fill="#9a9a9a"/><rect x="37" y="388.37" width="14" height="1" fill="#9a9a9a"/><rect x="49.3" y="392.85" width="1.8" height="1" fill="#9a9a9a"/><rect x="49.3" y="397.33" width="1.8" height="1" fill="#9a9a9a"/><rect x="49.3" y="401.82" width="1.8" height="1" fill="#9a9a9a"/><rect x="49.3" y="406.30" width="1.8" height="1" fill="#9a9a9a"/><rect x="46" y="410.78" width="5" height="1" fill="#a8a8a8"/><rect x="49.3" y="415.26" width="1.8" height="1" fill="#9a9a9a"/><rect x="49.3" y="419.74" width="1.8" height="1" fill="#9a9a9a"/><rect x="49.3" y="424.23" width="1.8" height="1" fill="#9a9a9a"/><rect x="49.3" y="428.71" width="1.8" height="1" fill="#9a9a9a"/><rect x="37" y="433.19" width="14" height="1" fill="#9a9a9a"/><rect x="49.3" y="437.67" width="1.8" height="1" fill="#9a9a9a"/><rect x="49.3" y="442.16" width="1.8" height="1" fill="#9a9a9a"/><rect x="49.3" y="446.64" width="1.8" height="1" fill="#9a9a9a"/><rect x="49.3" y="451.12" width="1.8" height="1" fill="#9a9a9a"/><rect x="46" y="455.60" width="5" height="1" fill="#a8a8a8"/><rect x="49.3" y="460.09" width="1.8" height="1" fill="#9a9a9a"/><rect x="49.3" y="464.57" width="1.8" height="1" fill="#9a9a9a"/><rect x="49.3" y="469.05" width="1.8" height="1" fill="#9a9a9a"/><rect x="49.3" y="473.53" width="1.8" height="1" fill="#9a9a9a"/><rect x="37" y="478.02" width="14" height="1" fill="#9a9a9a"/><rect x="49.3" y="482.50" width="1.8" height="1" fill="#9a9a9a"/><rect x="49.3" y="486.98" width="1.8" height="1" fill="#9a9a9a"/><rect x="49.3" y="491.46" width="1.8" height="1" fill="#9a9a9a"/><rect x="49.3" y="495.95" width="1.8" height="1" fill="#9a9a9a"/><rect x="46" y="500.43" width="5" height="1" fill="#a8a8a8"/><rect x="49.3" y="504.91" width="1.8" height="1" fill="#9a9a9a"/><rect x="49.3" y="509.39" width="1.8" height="1" fill="#9a9a9a"/><rect x="49.3" y="513.88" width="1.8" height="1" fill="#9a9a9a"/><rect x="49.3" y="518.36" width="1.8" height="1" fill="#9a9a9a"/><rect x="37" y="522.84" width="14" height="1" fill="#9a9a9a"/><rect x="49.3" y="527.32" width="1.8" height="1" fill="#9a9a9a"/><rect x="49.3" y="531.80" width="1.8" height="1" fill="#9a9a9a"/><rect x="49.3" y="536.29" width="1.8" height="1" fill="#9a9a9a"/><rect x="49.3" y="540.77" width="1.8" height="1" fill="#9a9a9a"/><rect x="46" y="545.25" width="5" height="1" fill="#a8a8a8"/><rect x="49.3" y="549.73" width="1.8" height="1" fill="#9a9a9a"/><rect x="49.3" y="554.22" width="1.8" height="1" fill="#9a9a9a"/><rect x="49.3" y="558.70" width="1.8" height="1" fill="#9a9a9a"/><rect x="49.3" y="563.18" width="1.8" height="1" fill="#9a9a9a"/><rect x="37" y="567.66" width="14" height="1" fill="#9a9a9a"/><rect x="49.3" y="572.15" width="1.8" height="1" fill="#9a9a9a"/><rect x="49.3" y="576.63" width="1.8" height="1" fill="#9a9a9a"/><rect x="49.3" y="581.11" width="1.8" height="1" fill="#9a9a9a"/><rect x="49.3" y="585.59" width="1.8" height="1" fill="#9a9a9a"/><rect x="46" y="590.08" width="5" height="1" fill="#a8a8a8"/><rect x="49.3" y="594.56" width="1.8" height="1" fill="#9a9a9a"/><rect x="49.3" y="599.04" width="1.8" height="1" fill="#9a9a9a"/><rect x="49.3" y="603.52" width="1.8" height="1" fill="#9a9a9a"/><rect x="49.3" y="608.01" width="1.8" height="1" fill="#9a9a9a"/><rect x="37" y="612.49" width="14" height="1" fill="#9a9a9a"/><rect x="49.3" y="616.97" width="1.8" height="1" fill="#9a9a9a"/><rect x="49.3" y="621.45" width="1.8" height="1" fill="#9a9a9a"/><rect x="49.3" y="625.94" width="1.8" height="1" fill="#9a9a9a"/><rect x="49.3" y="630.42" width="1.8" height="1" fill="#9a9a9a"/><rect x="46" y="634.90" width="5" height="1" fill="#a8a8a8"/><rect x="49.3" y="639.38" width="1.8" height="1" fill="#9a9a9a"/><rect x="49.3" y="643.86" width="1.8" height="1" fill="#9a9a9a"/><rect x="49.3" y="648.35" width="1.8" height="1" fill="#9a9a9a"/><rect x="49.3" y="652.83" width="1.8" height="1" fill="#9a9a9a"/><rect x="37" y="657.31" width="14" height="1" fill="#9a9a9a"/><rect x="49.3" y="661.79" width="1.8" height="1" fill="#9a9a9a"/><rect x="49.3" y="666.28" width="1.8" height="1" fill="#9a9a9a"/><rect x="49.3" y="670.76" width="1.8" height="1" fill="#9a9a9a"/><rect x="49.3" y="675.24" width="1.8" height="1" fill="#9a9a9a"/><rect x="46" y="679.72" width="5" height="1" fill="#a8a8a8"/><rect x="49.3" y="684.21" width="1.8" height="1" fill="#9a9a9a"/><rect x="49.3" y="688.69" width="1.8" height="1" fill="#9a9a9a"/><rect x="49.3" y="693.17" width="1.8" height="1" fill="#9a9a9a"/><rect x="49.3" y="697.65" width="1.8" height="1" fill="#9a9a9a"/><rect x="37" y="702.14" width="14" height="1" fill="#9a9a9a"/><rect x="49.3" y="706.62" width="1.8" height="1" fill="#9a9a9a"/><rect x="49.3" y="711.10" width="1.8" height="1" fill="#9a9a9a"/><rect x="49.3" y="715.58" width="1.8" height="1" fill="#9a9a9a"/><rect x="49.3" y="720.07" width="1.8" height="1" fill="#9a9a9a"/><rect x="46" y="724.55" width="5" height="1" fill="#a8a8a8"/><rect x="49.3" y="729.03" width="1.8" height="1" fill="#9a9a9a"/><rect x="49.3" y="733.51" width="1.8" height="1" fill="#9a9a9a"/><rect x="49.3" y="738.00" width="1.8" height="1" fill="#9a9a9a"/><rect x="49.3" y="742.48" width="1.8" height="1" fill="#9a9a9a"/></svg>
<div class="a" style="left:38px;top:67px;width:13px;height:680px;overflow:hidden">
<span class="t" style="left:1.4px;top:8.8px;font-size:8.5px;color:#f2f2f2;font-weight:700;">0</span>
<span class="t" style="left:1.4px;top:53.6px;font-size:8.5px;color:#f2f2f2;font-weight:700;">2</span>
<span class="t" style="left:1.4px;top:61.7px;font-size:8.5px;color:#f2f2f2;font-weight:700;">0</span>
<span class="t" style="left:1.4px;top:98.4px;font-size:8.5px;color:#f2f2f2;font-weight:700;">4</span>
<span class="t" style="left:1.4px;top:106.5px;font-size:8.5px;color:#f2f2f2;font-weight:700;">0</span>
<span class="t" style="left:1.4px;top:143.2px;font-size:8.5px;color:#f2f2f2;font-weight:700;">6</span>
<span class="t" style="left:1.4px;top:151.3px;font-size:8.5px;color:#f2f2f2;font-weight:700;">0</span>
<span class="t" style="left:1.4px;top:188.0px;font-size:8.5px;color:#f2f2f2;font-weight:700;">8</span>
<span class="t" style="left:1.4px;top:196.1px;font-size:8.5px;color:#f2f2f2;font-weight:700;">0</span>
<span class="t" style="left:1.4px;top:232.9px;font-size:8.5px;color:#f2f2f2;font-weight:700;">1</span>
<span class="t" style="left:1.4px;top:241.0px;font-size:8.5px;color:#f2f2f2;font-weight:700;">0</span>
<span class="t" style="left:1.4px;top:249.1px;font-size:8.5px;color:#f2f2f2;font-weight:700;">0</span>
<span class="t" style="left:1.4px;top:277.7px;font-size:8.5px;color:#f2f2f2;font-weight:700;">1</span>
<span class="t" style="left:1.4px;top:285.8px;font-size:8.5px;color:#f2f2f2;font-weight:700;">2</span>
<span class="t" style="left:1.4px;top:293.9px;font-size:8.5px;color:#f2f2f2;font-weight:700;">0</span>
<span class="t" style="left:1.4px;top:322.5px;font-size:8.5px;color:#f2f2f2;font-weight:700;">1</span>
<span class="t" style="left:1.4px;top:330.6px;font-size:8.5px;color:#f2f2f2;font-weight:700;">4</span>
<span class="t" style="left:1.4px;top:338.7px;font-size:8.5px;color:#f2f2f2;font-weight:700;">0</span>
<span class="t" style="left:1.4px;top:367.3px;font-size:8.5px;color:#f2f2f2;font-weight:700;">1</span>
<span class="t" style="left:1.4px;top:375.4px;font-size:8.5px;color:#f2f2f2;font-weight:700;">6</span>
<span class="t" style="left:1.4px;top:383.5px;font-size:8.5px;color:#f2f2f2;font-weight:700;">0</span>
<span class="t" style="left:1.4px;top:412.2px;font-size:8.5px;color:#f2f2f2;font-weight:700;">1</span>
<span class="t" style="left:1.4px;top:420.3px;font-size:8.5px;color:#f2f2f2;font-weight:700;">8</span>
<span class="t" style="left:1.4px;top:428.4px;font-size:8.5px;color:#f2f2f2;font-weight:700;">0</span>
<span class="t" style="left:1.4px;top:457.0px;font-size:8.5px;color:#f2f2f2;font-weight:700;">2</span>
<span class="t" style="left:1.4px;top:465.1px;font-size:8.5px;color:#f2f2f2;font-weight:700;">0</span>
<span class="t" style="left:1.4px;top:473.2px;font-size:8.5px;color:#f2f2f2;font-weight:700;">0</span>
<span class="t" style="left:1.4px;top:501.8px;font-size:8.5px;color:#f2f2f2;font-weight:700;">2</span>
<span class="t" style="left:1.4px;top:509.9px;font-size:8.5px;color:#f2f2f2;font-weight:700;">2</span>
<span class="t" style="left:1.4px;top:518.0px;font-size:8.5px;color:#f2f2f2;font-weight:700;">0</span>
<span class="t" style="left:1.4px;top:546.6px;font-size:8.5px;color:#f2f2f2;font-weight:700;">2</span>
<span class="t" style="left:1.4px;top:554.7px;font-size:8.5px;color:#f2f2f2;font-weight:700;">4</span>
<span class="t" style="left:1.4px;top:562.8px;font-size:8.5px;color:#f2f2f2;font-weight:700;">0</span>
<span class="t" style="left:1.4px;top:591.5px;font-size:8.5px;color:#f2f2f2;font-weight:700;">2</span>
<span class="t" style="left:1.4px;top:599.6px;font-size:8.5px;color:#f2f2f2;font-weight:700;">6</span>
<span class="t" style="left:1.4px;top:607.7px;font-size:8.5px;color:#f2f2f2;font-weight:700;">0</span>
<span class="t" style="left:1.4px;top:636.3px;font-size:8.5px;color:#f2f2f2;font-weight:700;">2</span>
<span class="t" style="left:1.4px;top:644.4px;font-size:8.5px;color:#f2f2f2;font-weight:700;">8</span>
<span class="t" style="left:1.4px;top:652.5px;font-size:8.5px;color:#f2f2f2;font-weight:700;">0</span>
</div>
<div class="a" style="left:37px;top:746px;width:15px;height:1px;background:#707070"></div>
<div class="a" style="left:37px;top:53px;width:15px;height:14px;background:#232323;border-right:1px solid #6e6e6e"></div>
<svg style="left:38px;top:53px" width="14" height="14" viewBox="0 0 14 14" shape-rendering="crispEdges"><path d="M1 4.5 H13" stroke="#8c8c8c" stroke-width="1" stroke-dasharray="1 1"/><path d="M4.5 1 V13" stroke="#8c8c8c" stroke-width="1" stroke-dasharray="1 1"/></svg>
<svg style="left:37px;top:65px" width="15" height="4" viewBox="0 0 15 4"><rect x="0" y="1.3" width="15" height="1.1" fill="#707070"/></svg>
<div class="a" style="left:1039px;top:53px;width:13px;height:696px;background:#4b4b4b"></div>
<div class="a" style="left:1052px;top:28px;width:3px;height:736px;background:#424242"></div>
<div class="a" style="left:1040px;top:131px;width:12px;height:540px;background:#696969;border-radius:6px"></div>
<svg style="left:1042px;top:57px" width="8" height="5" viewBox="0 0 8 5"><path d="M0.6 4.4 L4 1 L7.4 4.4" fill="none" stroke="#8a8a8a" stroke-width="1.1"/></svg>
<svg style="left:1041.8px;top:740.5px" width="8" height="5" viewBox="0 0 8 5"><path d="M0.6 0.6 L4 4 L7.4 0.6" fill="none" stroke="#c0c0c0" stroke-width="1.1"/></svg>
<div class="a" style="left:285px;top:172px;width:518px;height:417px;background:#fff;box-shadow:0 3px 15px 0 rgba(0,0,0,0.3)"></div>
<div class="a" style="left:285px;top:172px;width:518px;height:417px;background:#fff;border:1px solid #2d74bd;border-top:none"></div>
<div class="a" style="left:286px;top:172px;width:516px;height:27px;background:#0078d7"></div>
<svg style="left:784px;top:180px" width="9" height="9" viewBox="0 0 9 9"><path d="M0.5 0.5 L8.5 8.5 M8.5 0.5 L0.5 8.5" stroke="#fff" stroke-width="1.1"/></svg>
<div class="a" style="left:286px;top:199px;width:516px;height:249px;background:#0f1c2a"></div>
<svg style="left:295px;top:351px" width="18" height="9" viewBox="0 0 18 9"><path d="M17.5 4.5 H1 M4 1.4 L0.9 4.5 L4 7.6" fill="none" stroke="#56616c" stroke-width="1.1"/></svg>
<svg style="left:775px;top:351px" width="18" height="9" viewBox="0 0 18 9"><path d="M0.5 4.5 H16.6 M13.6 1.4 L16.7 4.5 L13.6 7.6" fill="none" stroke="#d4d8dc" stroke-width="1.1"/></svg>
<svg style="left:0;top:0" width="820" height="460" viewBox="0 0 820 460"><rect x="363.5" y="218" width="346.9" height="215.6" fill="#09121c"/><rect x="362.7" y="215.7" width="347.7" height="216.5" fill="#6d6d6d"/><rect x="362.7" y="215.7" width="347.7" height="13.2" fill="#5c5c5c"/><rect x="362.7" y="228.9" width="347.7" height="6.3" fill="#4c4c4c"/><rect x="362.7" y="235.2" width="26.3" height="197" fill="#626262"/><rect x="656.8" y="235.2" width="53.6" height="197" fill="#616161"/><circle cx="368.7" cy="222.2" r="2.6" fill="#ed6a5e"/><circle cx="377.7" cy="222.2" r="2.6" fill="#f5bf4f"/><circle cx="386.7" cy="222.2" r="2.6" fill="#61c554"/><rect x="367.4" y="243.6" width="6.6" height="5.6" fill="#757575"/><rect x="377.2" y="243.6" width="6.6" height="5.6" fill="#757575"/><rect x="367.4" y="251.7" width="6.6" height="5.6" fill="#757575"/><rect x="377.2" y="251.7" width="6.6" height="5.6" fill="#757575"/><rect x="367.4" y="259.7" width="6.6" height="5.6" fill="#757575"/><rect x="377.2" y="259.7" width="6.6" height="5.6" fill="#757575"/><rect x="367.4" y="267.8" width="6.6" height="5.6" fill="#757575"/><rect x="377.2" y="267.8" width="6.6" height="5.6" fill="#757575"/><rect x="367.4" y="275.8" width="6.6" height="5.6" fill="#757575"/><rect x="377.2" y="275.8" width="6.6" height="5.6" fill="#757575"/><rect x="367.4" y="283.9" width="6.6" height="5.6" fill="#757575"/><rect x="377.2" y="283.9" width="6.6" height="5.6" fill="#757575"/><rect x="367.4" y="291.9" width="6.6" height="5.6" fill="#757575"/><rect x="377.2" y="291.9" width="6.6" height="5.6" fill="#757575"/><rect x="367.4" y="299.9" width="6.6" height="5.6" fill="#757575"/><rect x="377.2" y="299.9" width="6.6" height="5.6" fill="#757575"/><rect x="367.4" y="308.0" width="6.6" height="5.6" fill="#757575"/><rect x="377.2" y="308.0" width="6.6" height="5.6" fill="#757575"/><rect x="367.4" y="316.1" width="6.6" height="5.6" fill="#757575"/><rect x="377.2" y="316.1" width="6.6" height="5.6" fill="#757575"/><rect x="367.4" y="324.1" width="6.6" height="5.6" fill="#757575"/><rect x="377.2" y="324.1" width="6.6" height="5.6" fill="#757575"/><rect x="367.4" y="332.1" width="6.6" height="5.6" fill="#757575"/><rect x="377.2" y="332.1" width="6.6" height="5.6" fill="#757575"/><rect x="367.4" y="340.2" width="6.6" height="5.6" fill="#757575"/><rect x="377.2" y="340.2" width="6.6" height="5.6" fill="#757575"/><rect x="367.4" y="348.2" width="6.6" height="5.6" fill="#757575"/><rect x="377.2" y="348.2" width="6.6" height="5.6" fill="#757575"/><rect x="372.6" y="364.8" width="10" height="10" fill="none" stroke="#d8d8d8" stroke-width="1"/><rect x="375.4" y="367.6" width="4.4" height="4.4" fill="none" stroke="#d8d8d8" stroke-width="0.8"/><rect x="367.8" y="360.2" width="10" height="9.8" fill="#bdbdbd" stroke="#8a8a8a" stroke-width="0.6"/><rect x="681.8" y="235.2" width="28.6" height="6.3" fill="#727272"/><rect x="663" y="255" width="20.8" height="2.6" fill="#a2a2a2"/><rect x="668" y="265.5" width="14.8" height="5" fill="#474747"/><rect x="686" y="265.5" width="14.8" height="5" fill="#474747"/><rect x="668" y="274.3" width="14.8" height="5" fill="#474747"/><rect x="686" y="274.3" width="14.8" height="5" fill="#474747"/><rect x="663" y="287" width="29.4" height="2.6" fill="#a2a2a2"/><rect x="669" y="297.5" width="5.8" height="5.2" fill="#e9776b"/><rect x="678" y="297.5" width="22.8" height="5" fill="#474747"/><rect x="669" y="306.4" width="5.8" height="5.2" fill="#f4eadb"/><rect x="678" y="306.4" width="22.8" height="5" fill="#474747"/><rect x="663" y="320.6" width="20.8" height="2.6" fill="#a2a2a2"/><rect x="663" y="331" width="17.2" height="5.4" fill="#707070"/><rect x="684" y="331" width="17.2" height="5.4" fill="#707070"/><rect x="460.6" y="246" width="136" height="173" fill="#4c4c4c"/><rect x="459.3" y="244.4" width="136" height="173" fill="#fff"/><defs><clipPath id="pic"><rect x="477.5" y="260.4" width="100" height="100"/></clipPath></defs><g clip-path="url(#pic)"><rect x="477.5" y="260.4" width="100" height="100" fill="#9fd1e6"/><polygon points="518.1,286.7 513.7,289.3 515.9,293.9 510.9,294.7 511.1,299.8 506.2,298.6 504.4,303.4 500.3,300.3 496.9,304.1 494.3,299.7 489.7,301.9 488.9,296.9 483.8,297.1 485.0,292.2 480.2,290.4 483.3,286.3 479.5,282.9 483.9,280.3 481.7,275.7 486.7,274.9 486.5,269.8 491.4,271.0 493.2,266.2 497.3,269.3 500.7,265.5 503.3,269.9 507.9,267.7 508.7,272.7 513.8,272.5 512.6,277.4 517.4,279.2 514.3,283.3" fill="#f5cb3c" stroke="#f5cb3c" stroke-width="1.2" stroke-linejoin="round"/><circle cx="498.8" cy="284.8" r="14.6" fill="#f3c41f"/><path d="M497 270.3 A14.6 14.6 0 0 0 497 299.3 A20 20 0 0 1 497 270.3 Z" fill="#f7d557"/><path d="M496.5 333 L523.4 292 L536 312 L540 333 Z" fill="#9fb3c6"/><path d="M514 333 L523.4 292 L531 304 L526 318 L522 333 Z" fill="#8ea4b9"/><path d="M511 333 L542 283.6 L568 333 Z" fill="#8aa0b6"/><path d="M542 283.6 L511 333 L522 333 L533 312 Z" fill="#a7bacb"/><path d="M548 300 L552 333 L560 333 L553 312 Z" fill="#7d94ab"/><path d="M497 332.6 H567.8 L571 339 H493 Z" fill="#8fa5ba"/><path d="M523.4 292 L511.4 310.4 L515.6 307.2 L518.4 309 L521.6 304.6 L524.6 306.6 L527.8 303.4 L529.6 305 Z" fill="#fdfdfd"/><path d="M523.4 292 L511.4 310.4 L515.6 307.2 L519 301 Z" fill="#d9e0e6"/><path d="M542 283.6 L527.6 308.6 L531.8 305.8 L535.4 312.8 L539.4 304.8 L543.4 310 L546.6 303.6 L550.4 309 L553.4 305.4 L559.8 316 Z" fill="#fdfdfd"/><path d="M542 283.6 L527.6 308.6 L531.8 305.8 L536.6 298 Z" fill="#d9e0e6"/><path d="M477.5 336 Q490 332 505 335.4 Q525 339 545 342 L577.5 345 V360.4 H477.5 Z" fill="#3c9f38"/><path d="M536 341.4 Q556 329.6 577.5 334 V347 Q556 342 536 341.4 Z" fill="#2f8a2c"/><path d="M515 338 Q532 331.6 548 336 Q540 338.6 536 341.6 Q524 341 515 338 Z" fill="#3f9d39"/><path d="M477.5 345.4 Q500 340.6 540 342 Q560 343 577.5 347.6 V360.4 H477.5 Z" fill="#37932f"/><path d="M477.5 358.6 Q500 347.6 528 346 Q556 346 577.5 356.6 V360.4 H477.5 Z" fill="#44ad3f"/><path d="M477.5 350 Q487 347.4 497 350.4 Q486 354 477.5 358.6 Z" fill="#2f8a2c"/></g><rect x="491.4" y="371.2" width="86.1" height="3.2" fill="#b7b7b7"/><rect x="491.4" y="378.2" width="86.1" height="3.2" fill="#b7b7b7"/><rect x="477.5" y="385.1" width="100.0" height="3.2" fill="#b7b7b7"/><rect x="477.5" y="391.9" width="100.0" height="3.2" fill="#b7b7b7"/></svg>
<span class="t" style="left:477.2px;top:364.6px;font-size:20px;color:#b0b0b0;font-family:'Liberation Serif',serif;-webkit-text-stroke:0.6px #b0b0b0;">T</span>
<div class="a" style="left:520.5px;top:459.5px;width:4px;height:4px;border-radius:50%;background:#222"></div>
<div class="a" style="left:542px;top:459.5px;width:3.6px;height:3.6px;border-radius:50%;background:#c6c6c6"></div>
<div class="a" style="left:563.8px;top:459.5px;width:3.6px;height:3.6px;border-radius:50%;background:#c6c6c6"></div>
<span class="t" style="left:300.0px;top:482.7px;font-size:14.25px;color:#2b2b2b;font-weight:700;letter-spacing:-0.03px;">Приветствуем вас!</span>
<span class="t" style="left:300.0px;top:507.8px;font-size:12.5px;color:#505050;letter-spacing:-0.03px;">Начнем создание проекта. Пройдите краткое обучение по InDesign.</span>
<span class="t" style="left:300.0px;top:557.9px;font-size:10.75px;color:#2c6ecb;letter-spacing:-0.01px;">Напомнить позже</span>
<div class="a" style="left:401px;top:556.4px;width:12px;height:12.2px;background:#fdfdfd;border:1px solid #c6c6c6;border-radius:1px"></div>
<svg style="left:402.6px;top:557.4px" width="10" height="9" viewBox="0 0 10 9"><path d="M1 4.6 L3.8 7.4 L9 1" fill="none" stroke="#6c6c6c" stroke-width="2"/></svg>
<span class="t" style="left:419.0px;top:557.9px;font-size:10.75px;color:#333;letter-spacing:-0.06px;">Показать при следующем запуске</span>
<div class="a" style="left:720px;top:554.2px;width:67.6px;height:21.6px;border-radius:11px;background:#dbe5fb"></div>
<span class="t" style="left:746.5px;top:560.5px;font-size:10px;color:#f4f7fe;letter-spacing:0.02px;">OK</span>
<div class="a" style="left:1055px;top:28px;width:225px;height:736px;background:#535353"></div>
<div class="a" style="left:1055px;top:28px;width:225px;height:10px;background:#424242"></div>
<svg style="left:1267.3px;top:30.8px" width="7" height="5" viewBox="0 0 7 5"><path d="M0.3 0.2 L2.9 2.4 L0.3 4.6 L1.2 2.4 Z M3.7 0.2 L6.3 2.4 L3.7 4.6 L4.6 2.4 Z" fill="#dedede" stroke="#dedede" stroke-width="0.5" stroke-linejoin="round"/></svg>
<div class="a" style="left:1055px;top:38px;width:225px;height:24px;background:#424242"></div>
<div class="a" style="left:1121px;top:38px;width:123px;height:24px;background:#474747"></div>
<div class="a" style="left:1055px;top:38px;width:66px;height:25px;background:#535353"></div>
<div class="a" style="left:1120px;top:38px;width:1px;height:24px;background:#3a3a3a"></div>
<div class="a" style="left:1181px;top:38px;width:1px;height:24px;background:#3a3a3a"></div>
<div class="a" style="left:1244px;top:38px;width:1px;height:24px;background:#3a3a3a"></div>
<span class="t" style="left:1065.5px;top:46.5px;font-size:9.25px;color:#f4f4f4;font-weight:700;">Свойства</span>
<span class="t" style="left:1130.5px;top:46.5px;font-size:9.25px;color:#b8b8b8;font-weight:700;transform:scaleX(1.035);">Страницы</span>
<div class="a" style="left:1191px;top:40px;width:53px;height:20px;overflow:hidden">
<span class="t" style="left:1.3px;top:6.5px;font-size:9.25px;color:#b8b8b8;font-weight:700;transform:scaleX(1.009);">CC Libraries</span>
</div>
<span class="t" style="left:1064.0px;top:74.0px;font-size:8.75px;color:#e4e4e4;transform:scaleX(1.022);">Объект не выбран</span>
<div class="hr" style="top:92px"></div>
<div class="hr" style="top:299px"></div>
<div class="hr" style="top:379px"></div>
<div class="hr" style="top:414px"></div>
<div class="hr" style="top:449px"></div>
<span class="t" style="left:1064.0px;top:103.6px;font-size:8.75px;color:#e4e4e4;transform:scaleX(1.004);">Документ</span>
<div class="fld" style="left:1064px;top:122px;width:84px;height:18px"></div>
<span class="t" style="left:1068.0px;top:127.9px;font-size:8.75px;color:#ececec;transform:scaleX(0.981);">A4</span>
<svg style="left:1135.5px;top:128.5px" width="8" height="5" viewBox="0 0 8 5"><path d="M0.6 0.6 L4 4 L7.4 0.6" fill="none" stroke="#d0d0d0" stroke-width="1.2"/></svg>
<div class="dk" style="left:1177px;top:122px;width:19px;height:19px"></div>
<svg style="left:1180px;top:124px" width="13" height="15" viewBox="0 0 13 15"><rect x="0.6" y="0.6" width="11.8" height="13.8" fill="none" stroke="#d2d2d2" stroke-width="1.2"/><circle cx="6.5" cy="4.4" r="1.7" fill="#d2d2d2"/><path d="M3.6 14 V8.6 Q3.6 6.8 5.2 6.8 H7.8 Q9.4 6.8 9.4 8.6 V14 Z" fill="#d2d2d2"/></svg>
<svg style="left:1203px;top:124px" width="13" height="15" viewBox="0 0 13 15"><rect x="0.6" y="1.6" width="11.8" height="11.8" fill="none" stroke="#bdbdbd" stroke-width="1.2"/><circle cx="3.8" cy="7.5" r="1.5" fill="#bdbdbd"/><path d="M12 4.2 H7.6 Q6 4.2 6 5.8 V9.2 Q6 10.8 7.6 10.8 H12 Z" fill="#bdbdbd"/></svg>
<span class="t" style="left:1067.5px;top:155.8px;font-size:8.75px;color:#e0e0e0;transform:scaleX(1.043);">Ш:</span>
<div class="fld" style="left:1082px;top:151px;width:66px;height:19px"></div><div class="a" style="left:1098px;top:152px;width:1px;height:17px;background:#666"></div><svg style="left:1086.5px;top:154.5px" width="8" height="12" viewBox="0 0 8 12"><path d="M0.8 4 L4 0.9 L7.2 4 M0.8 8 L4 11.1 L7.2 8" fill="none" stroke="#c4c4c4" stroke-width="1.1"/></svg><span class="t" style="left:1102.5px;top:156.8px;font-size:8.75px;color:#ececec;transform:scaleX(0.912);">210 мм</span>
<span class="t" style="left:1070.6px;top:179.0px;font-size:8.75px;color:#e0e0e0;transform:scaleX(0.942);">В:</span>
<div class="fld" style="left:1082px;top:174px;width:66px;height:19px"></div><div class="a" style="left:1098px;top:175px;width:1px;height:17px;background:#666"></div><svg style="left:1086.5px;top:177.5px" width="8" height="12" viewBox="0 0 8 12"><path d="M0.8 4 L4 0.9 L7.2 4 M0.8 8 L4 11.1 L7.2 8" fill="none" stroke="#c4c4c4" stroke-width="1.1"/></svg><span class="t" style="left:1102.5px;top:179.8px;font-size:8.75px;color:#ececec;transform:scaleX(0.912);">297 мм</span>
<svg style="left:1177px;top:152px" width="17" height="17" viewBox="0 0 17 17"><path d="M1 5.6 L3.6 3 H7.2 V14 H1 Z M9.8 3 H13.4 L16 5.6 V14 H9.8 Z" fill="#d2d2d2"/><path d="M8.5 0 V17" stroke="#d2d2d2" stroke-width="1"/></svg>
<div class="fld" style="left:1197px;top:151px;width:62px;height:18px"></div>
<span class="t" style="left:1201.5px;top:155.6px;font-size:9.5px;color:#ececec;">1</span>
<div class="a" style="left:1177px;top:178.5px;width:11px;height:11px;background:#cdcdcd;border-radius:2px"></div>
<svg style="left:1178.5px;top:180.5px" width="8" height="7" viewBox="0 0 8 7"><path d="M0.8 3.4 L3 5.8 L7.2 0.8" fill="none" stroke="#3a3a3a" stroke-width="1.5"/></svg>
<span class="t" style="left:1193.0px;top:180.1px;font-size:8.75px;color:#e4e4e4;transform:scaleX(0.979);">Разворот</span>
<span class="t" style="left:1064.0px;top:203.6px;font-size:8.75px;color:#e4e4e4;transform:scaleX(0.985);">Поля</span>
<svg style="left:1064.5px;top:222.5px" width="15" height="15" viewBox="0 0 15 15"><rect x="0" y="0.4" width="14.6" height="4" fill="#d2d2d2"/><rect x="0.6" y="7" width="13.4" height="7" fill="none" stroke="#d2d2d2" stroke-width="1.2"/></svg>
<svg style="left:1064.5px;top:246px" width="15" height="15" viewBox="0 0 15 15"><rect x="0" y="10.6" width="14.6" height="4" fill="#d2d2d2"/><rect x="0.6" y="1" width="13.4" height="7" fill="none" stroke="#d2d2d2" stroke-width="1.2"/></svg>
<div class="fld" style="left:1082px;top:221px;width:66px;height:19px"></div><div class="a" style="left:1098px;top:222px;width:1px;height:17px;background:#666"></div><svg style="left:1086.5px;top:224.5px" width="8" height="12" viewBox="0 0 8 12"><path d="M0.8 4 L4 0.9 L7.2 4 M0.8 8 L4 11.1 L7.2 8" fill="none" stroke="#c4c4c4" stroke-width="1.1"/></svg><span class="t" style="left:1102.5px;top:226.8px;font-size:8.75px;color:#ececec;transform:scaleX(0.937);">12,7 мм</span>
<div class="fld" style="left:1082px;top:244px;width:66px;height:19px"></div><div class="a" style="left:1098px;top:245px;width:1px;height:17px;background:#666"></div><svg style="left:1086.5px;top:247.5px" width="8" height="12" viewBox="0 0 8 12"><path d="M0.8 4 L4 0.9 L7.2 4 M0.8 8 L4 11.1 L7.2 8" fill="none" stroke="#c4c4c4" stroke-width="1.1"/></svg><span class="t" style="left:1102.5px;top:249.8px;font-size:8.75px;color:#ececec;transform:scaleX(0.937);">12,7 мм</span>
<div class="dk" style="left:1152px;top:231px;width:20px;height:19px"></div>
<svg style="left:1158px;top:234px" width="8" height="13" viewBox="0 0 8 13"><rect x="1.2" y="1" width="4.2" height="7" rx="2.1" fill="none" stroke="#e8e8e8" stroke-width="1.5"/><rect x="2.6" y="5" width="4.2" height="7" rx="2.1" fill="none" stroke="#e8e8e8" stroke-width="1.5"/></svg>
<svg style="left:1176.5px;top:222.5px" width="15" height="15" viewBox="0 0 15 15"><rect x="11" y="0" width="3.6" height="14.6" fill="#d2d2d2"/><rect x="0.6" y="2.6" width="8" height="9.6" fill="none" stroke="#d2d2d2" stroke-width="1.2"/></svg>
<svg style="left:1176.5px;top:246px" width="15" height="15" viewBox="0 0 15 15"><rect x="0" y="0" width="3.6" height="14.6" fill="#d2d2d2"/><rect x="6" y="2.6" width="8" height="9.6" fill="none" stroke="#d2d2d2" stroke-width="1.2"/></svg>
<div class="fld" style="left:1194px;top:221px;width:66px;height:19px"></div><div class="a" style="left:1210px;top:222px;width:1px;height:17px;background:#666"></div><svg style="left:1198.5px;top:224.5px" width="8" height="12" viewBox="0 0 8 12"><path d="M0.8 4 L4 0.9 L7.2 4 M0.8 8 L4 11.1 L7.2 8" fill="none" stroke="#c4c4c4" stroke-width="1.1"/></svg><span class="t" style="left:1214.5px;top:226.8px;font-size:8.75px;color:#ececec;transform:scaleX(0.937);">12,7 мм</span>
<div class="fld" style="left:1194px;top:244px;width:66px;height:19px"></div><div class="a" style="left:1210px;top:245px;width:1px;height:17px;background:#666"></div><svg style="left:1198.5px;top:247.5px" width="8" height="12" viewBox="0 0 8 12"><path d="M0.8 4 L4 0.9 L7.2 4 M0.8 8 L4 11.1 L7.2 8" fill="none" stroke="#c4c4c4" stroke-width="1.1"/></svg><span class="t" style="left:1214.5px;top:249.8px;font-size:8.75px;color:#ececec;transform:scaleX(0.937);">12,7 мм</span>
<div class="btn" style="left:1064px;top:276px;width:196px;height:18px"></div>
<span class="t" style="left:1124.5px;top:281.6px;font-size:8.75px;color:#ececec;">Настройка макета</span>
<span class="t" style="left:1064.0px;top:311.9px;font-size:8.75px;color:#e4e4e4;transform:scaleX(1.021);">Страница</span>
<div class="fld" style="left:1064px;top:329px;width:84px;height:18px"></div>
<div class="a" style="left:1131px;top:330px;width:1px;height:16px;background:#666"></div>
<span class="t" style="left:1068.5px;top:333.1px;font-size:9.5px;color:#ececec;">1</span>
<svg style="left:1135.5px;top:336px" width="8" height="5" viewBox="0 0 8 5"><path d="M0.6 0.6 L4 4 L7.4 0.6" fill="none" stroke="#d0d0d0" stroke-width="1.2"/></svg>
<svg style="left:1217px;top:334.5px" width="11" height="11" viewBox="0 0 11 11"><rect x="0.6" y="0.6" width="9.8" height="9.8" rx="1" fill="none" stroke="#c8c8c8" stroke-width="1.1"/><path d="M5.5 2.8 V8.2 M2.8 5.5 H8.2" stroke="#c8c8c8" stroke-width="1.1"/></svg>
<svg style="left:1241.5px;top:334px" width="10" height="12" viewBox="0 0 10 12"><path d="M0.5 2.4 H9.5 M3.4 2.2 V0.8 H6.6 V2.2" fill="none" stroke="#767676" stroke-width="1"/><path d="M1.6 3.4 H8.4 V10.4 Q8.4 11.4 7.4 11.4 H2.6 Q1.6 11.4 1.6 10.4 Z" fill="none" stroke="#767676" stroke-width="1"/><path d="M3.7 4.6 V10 M5 4.6 V10 M6.3 4.6 V10" stroke="#767676" stroke-width="0.8"/></svg>
<div class="btn" style="left:1064px;top:354.5px;width:196px;height:18px"></div>
<span class="t" style="left:1121.0px;top:360.6px;font-size:8.75px;color:#ececec;transform:scaleX(1.025);">Редактировать стр.</span>
<span class="t" style="left:1064.0px;top:394.1px;font-size:8.75px;color:#e4e4e4;transform:scaleX(1.076);">Линейки и сетки</span>
<div class="dk" style="left:1172px;top:388px;width:19.5px;height:19.5px"></div>
<svg style="left:1174.5px;top:390.4px" width="15" height="15" viewBox="0 0 15 15"><path d="M0.4 0.4 H14.4 V4 H4 V14.4 H0.4 Z" fill="#d2d2d2"/><path d="M5.5 1.6 h1.2 v1.2 h-1.2z M7.7 1.6 h1.2 v1.2 h-1.2z M9.9 1.6 h1.2 v1.2 h-1.2z M12.1 1.6 h1.2 v1.2 h-1.2z M1.6 5.5 h1.2 v1.2 h-1.2z M1.6 7.7 h1.2 v1.2 h-1.2z M1.6 9.9 h1.2 v1.2 h-1.2z M1.6 12.1 h1.2 v1.2 h-1.2z" fill="#555"/></svg>
<svg style="left:1208px;top:390.6px" width="15" height="15" viewBox="0 0 15 15"><rect x="0.6" y="0.6" width="13.8" height="13.8" fill="none" stroke="#c0c0c0" stroke-width="1.2"/><path d="M3 0.6 V14.4 M12 0.6 V14.4" stroke="#c0c0c0" stroke-width="0.8"/><path d="M0.6 3.6 H14.4 M0.6 6.2 H14.4 M0.6 8.8 H14.4 M0.6 11.4 H14.4" stroke="#c0c0c0" stroke-width="0.9"/></svg>
<svg style="left:1241.5px;top:390.6px" width="15" height="15" viewBox="0 0 15 15"><rect x="0.6" y="0.6" width="13.8" height="13.8" fill="none" stroke="#c0c0c0" stroke-width="1.2"/><path d="M5.2 0.6 V14.4 M9.8 0.6 V14.4 M0.6 5.2 H14.4 M0.6 9.8 H14.4" stroke="#c0c0c0" stroke-width="1"/></svg>
<span class="t" style="left:1064.0px;top:429.8px;font-size:8.75px;color:#e4e4e4;transform:scaleX(1.015);">Направляющие</span>
<div class="dk" style="left:1172px;top:424px;width:19.5px;height:19px"></div>
<div class="dk" style="left:1205.5px;top:424px;width:19.5px;height:19px"></div>
<div class="dk" style="left:1239px;top:424px;width:19.5px;height:19px"></div>
<svg style="left:1174.5px;top:426px" width="15" height="15" viewBox="0 0 15 15"><path d="M4 0 V15 M7 0 V15 M0 5.4 H15 M0 10.6 H15" stroke="#d2d2d2" stroke-width="1.1"/></svg>
<svg style="left:1208px;top:426px" width="15" height="15" viewBox="0 0 15 15"><path d="M4 0 V15 M7 0 V11 M0 5.4 H15 M0 10.6 H8" stroke="#d2d2d2" stroke-width="1.1"/><rect x="9" y="10.4" width="5.6" height="4.4" fill="#d2d2d2"/><path d="M10.2 10.4 V8.8 Q10.2 7.6 11.4 7.6 Q12.6 7.6 13 8.4" fill="none" stroke="#d2d2d2" stroke-width="1"/></svg>
<svg style="left:1241.5px;top:426px" width="15" height="15" viewBox="0 0 15 15"><path d="M4 0 V15 M0 5.4 H15" stroke="#d2d2d2" stroke-width="1.1"/><path d="M4.6 5 L7.8 2.2 M4.6 5.8 L7.8 8.6" stroke="#d2d2d2" stroke-width="1"/><path d="M12.6 7.4 L9 11.6 H11.6 L10.4 15 L14.4 10.4 H11.8 Z" fill="#d2d2d2"/></svg>
<span class="t" style="left:1064.0px;top:458.1px;font-size:8.75px;color:#e4e4e4;transform:scaleX(1.015);">Быстрые действия</span>
<div class="btn" style="left:1064px;top:474.5px;width:196px;height:18.5px"></div>
<span class="t" style="left:1130.7px;top:480.8px;font-size:8.75px;color:#ececec;transform:scaleX(1.011);">Импорт файла</span>
<div class="a" style="left:37px;top:749px;width:1003px;height:15px;background:#535353"></div>
<div class="a" style="left:503px;top:749px;width:517px;height:15px;background:#4b4b4b"></div>
<span class="t" style="left:50.0px;top:751.9px;font-size:8.75px;color:#e4e4e4;transform:scaleX(0.943);">66,75%</span>
<svg style="left:87px;top:753.5px" width="8" height="5" viewBox="0 0 8 5"><path d="M0.6 0.6 L4 4 L7.4 0.6" fill="none" stroke="#d0d0d0" stroke-width="1.2"/></svg>
<svg style="left:105px;top:752.2px" width="9" height="8" viewBox="0 0 9 8"><rect x="0.4" y="0" width="1.6" height="8" fill="#858585"/><path d="M8.4 0 V8 L2.6 4 Z" fill="#858585"/></svg>
<svg style="left:125px;top:752.2px" width="6" height="8" viewBox="0 0 6 8"><path d="M5.6 0 V8 L0.4 4 Z" fill="#858585"/></svg>
<div class="fld" style="left:140px;top:749.8px;width:80px;height:12.6px;border-radius:2px"></div>
<div class="a" style="left:204px;top:750.8px;width:1px;height:11px;background:#666"></div>
<span class="t" style="left:144.4px;top:751.5px;font-size:9.5px;color:#ececec;">1</span>
<svg style="left:208.8px;top:753.8px" width="8" height="5" viewBox="0 0 8 5"><path d="M0.6 0.6 L4 4 L7.4 0.6" fill="none" stroke="#d0d0d0" stroke-width="1.2"/></svg>
<svg style="left:233px;top:752.2px" width="6" height="8" viewBox="0 0 6 8"><path d="M0.4 0 V8 L5.6 4 Z" fill="#858585"/></svg>
<svg style="left:249px;top:752.2px" width="9" height="8" viewBox="0 0 9 8"><rect x="7" y="0" width="1.6" height="8" fill="#858585"/><path d="M0.6 0 V8 L6.4 4 Z" fill="#858585"/></svg>
<svg style="left:272px;top:750.6px" width="14" height="12" viewBox="0 0 14 12"><path d="M5.4 0.4 A5 5 0 1 0 10.4 5.4 L10.4 10.4 L0.6 10.4 Z" fill="#c8c8c8"/><circle cx="5.4" cy="5.4" r="5" fill="#c8c8c8"/><path d="M5.6 0.8 V5.6 H10" fill="none" stroke="#535353" stroke-width="1.2"/><path d="M11.4 9.6 h2.4 l-1.2 1.6 z" fill="#c8c8c8"/></svg>
<span class="t" style="left:300.6px;top:751.9px;font-size:8.75px;color:#e4e4e4;transform:scaleX(1.054);">[Основной] (рабо...</span>
<svg style="left:390px;top:753.8px" width="8" height="5" viewBox="0 0 8 5"><path d="M0.6 0.6 L4 4 L7.4 0.6" fill="none" stroke="#d0d0d0" stroke-width="1.2"/></svg>
<div class="a" style="left:412.5px;top:752.2px;width:9px;height:9px;border-radius:50%;background:#3fb54a"></div>
<span class="t" style="left:426.0px;top:751.9px;font-size:8.75px;color:#e4e4e4;transform:scaleX(1.056);">Ошибок нет</span>
<svg style="left:491px;top:753.8px" width="8" height="5" viewBox="0 0 8 5"><path d="M0.6 0.6 L4 4 L7.4 0.6" fill="none" stroke="#d0d0d0" stroke-width="1.2"/></svg>
<svg style="left:507.5px;top:752.6px" width="5" height="8" viewBox="0 0 5 8"><path d="M4.4 0.6 L1 4 L4.4 7.4" fill="none" stroke="#8a8a8a" stroke-width="1.1"/></svg>
<div class="a" style="left:694px;top:750.5px;width:254px;height:11.5px;background:#696969;border-radius:6px"></div>
<svg style="left:1009.5px;top:752.6px" width="5" height="8" viewBox="0 0 5 8"><path d="M0.6 0.6 L4 4 L0.6 7.4" fill="none" stroke="#8a8a8a" stroke-width="1.1"/></svg>
<div class="a" style="left:1020px;top:749px;width:33px;height:15px;background:#535353"></div>
<svg style="left:1023.2px;top:751.4px" width="14" height="10" viewBox="0 0 14 10"><rect x="0.6" y="0.6" width="12.8" height="8.8" fill="none" stroke="#c2c2c2" stroke-width="1"/><path d="M7 0.6 V9.4" stroke="#c2c2c2" stroke-width="1"/></svg>
<svg style="left:1043px;top:753px" width="9" height="9" viewBox="0 0 9 9"><path d="M7.5 1.5 v0.9 M7.5 3.5 v0.9 M7.5 5.5 v0.9 M7.5 7.5 v0.9 M5.5 3.5 v0.9 M5.5 5.5 v0.9 M5.5 7.5 v0.9 M3.5 5.5 v0.9 M3.5 7.5 v0.9 M1.5 7.5 v0.9" stroke="#6c6c6c" stroke-width="0.9"/></svg>
<div class="a" style="left:0;top:762.6px;width:1280px;height:1.4px;background:#3c3c3c"></div>
</div></body></html>
